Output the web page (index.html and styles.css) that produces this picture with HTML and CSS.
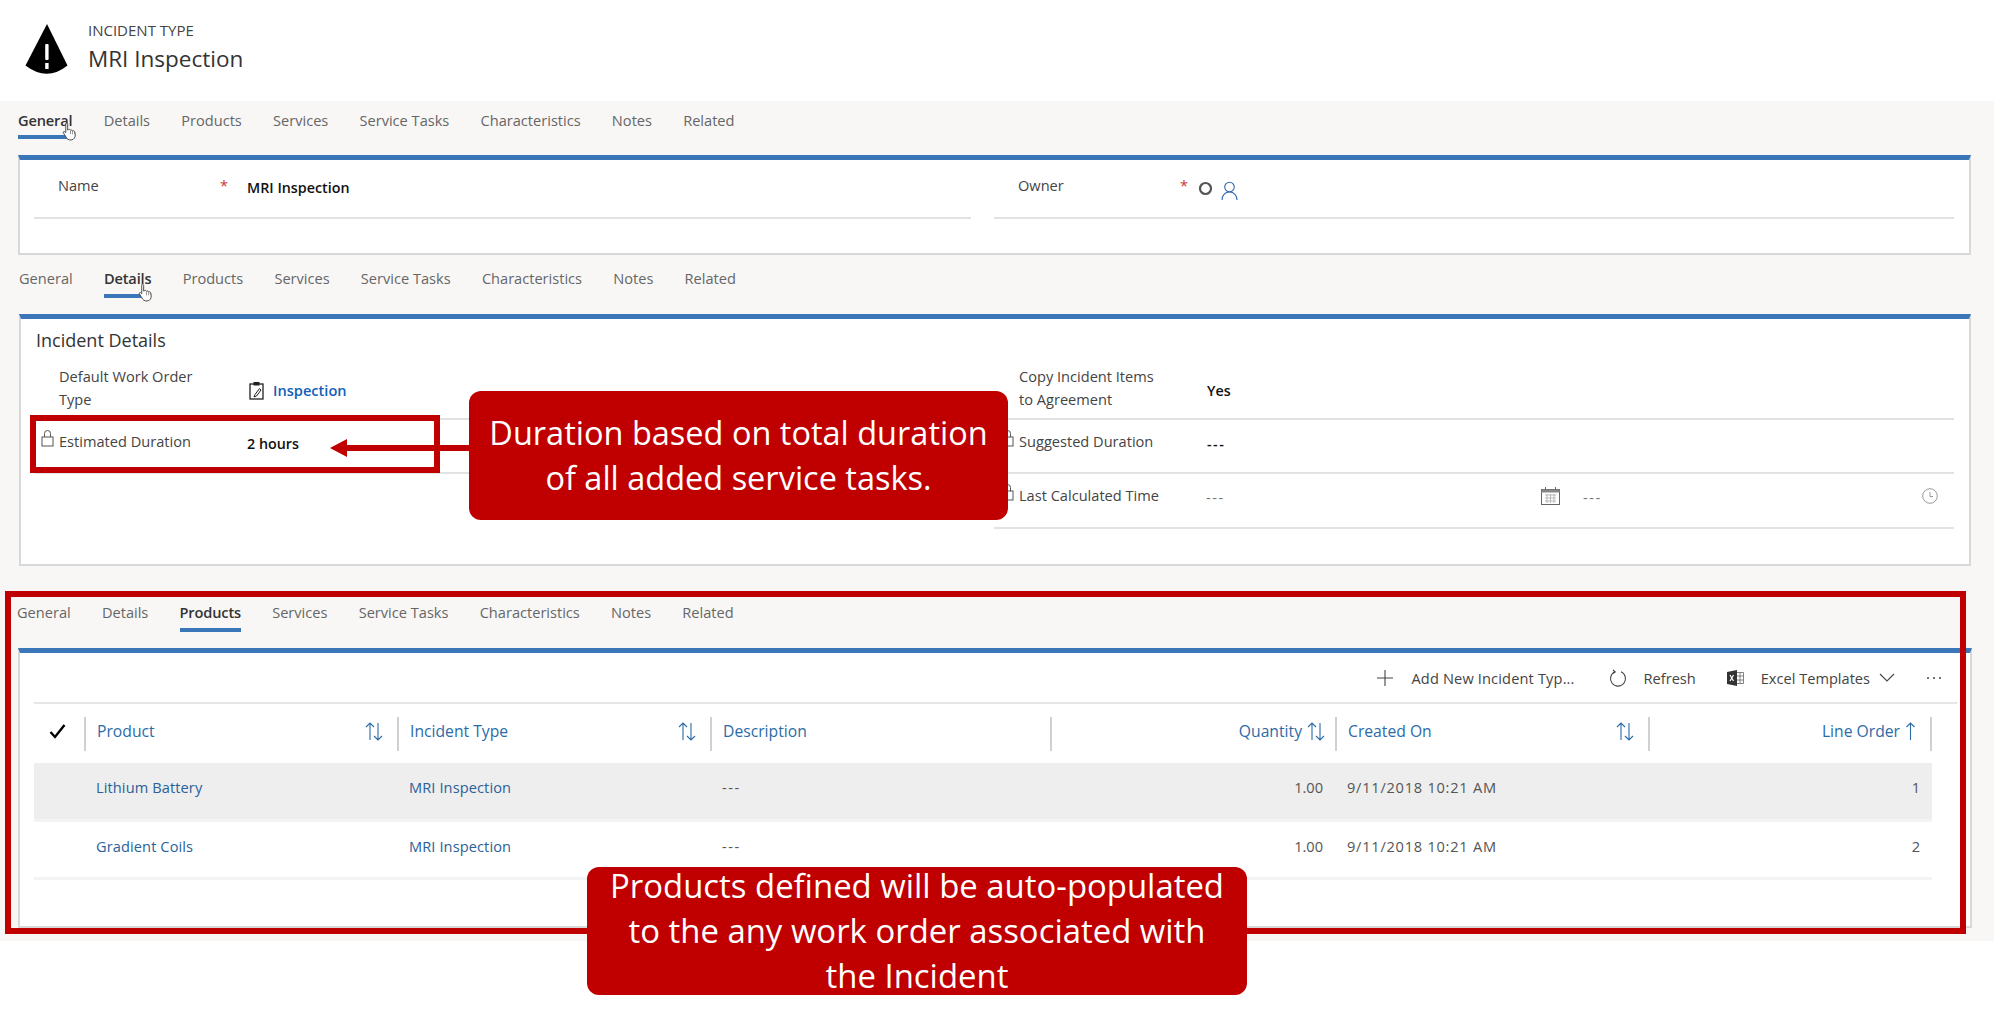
FILE: index.html

```html
<!DOCTYPE html>
<html lang="en">
<head>
    <meta charset="UTF-8">
    <title>Incident Type - MRI Inspection</title>
    <link rel="stylesheet" href="styles.css">
</head>
<body>
<div class="page">
    <header class="record-header">
        <svg class="record-icon" width="44" height="54" viewBox="0 0 44 54">
            <path d="M23 0 L43.500 41.500 Q23 58 1.500 41.500 Z" fill="#000"/>
            <rect x="21.200" y="20" width="3.400" height="16" rx="1" fill="#fff"/>
            <rect x="21.200" y="39" width="3.400" height="6" fill="#fff"/>
        </svg>
        <div>
            <div class="record-type">INCIDENT TYPE</div>
            <div class="record-name">MRI Inspection</div>
        </div>
    </header>

    <main class="content">
        <!-- General tab -->
        <section class="panel panel-general">
            <nav class="tabs">
                <a class="tab tab-active">General
                    <svg class="hand hand-general" width="17" height="19" viewBox="0 0 18 20"><path d="M4 1.500c1-.8 2 0 2 1v6l1-.5c1-.5 1.800 0 2 .6 1-.5 2 0 2.200.7 1-.4 2 .1 2.200 1l.6 3c.3 2-1 5.700-4.500 5.700-3 0-4.200-1.300-5.200-3L1.500 11.500c-.6-1 .6-2 1.500-1.200l1 1V2.500z" fill="#fff" stroke="#444" stroke-width="1"/><path d="M9 9v4M11.200 9.500v3.500M13.400 10.500v2.500" stroke="#777" stroke-width=".8"/></svg>
                </a>
                <a class="tab">Details</a>
                <a class="tab">Products</a>
                <a class="tab">Services</a>
                <a class="tab">Service Tasks</a>
                <a class="tab">Characteristics</a>
                <a class="tab">Notes</a>
                <a class="tab">Related</a>
            </nav>
            <div class="card card-general">
                <div class="columns">
                    <div class="field field-top">
                        <span class="field-label label-short">Name</span>
                        <span class="required">*</span>
                        <span class="field-value">MRI Inspection</span>
                    </div>
                    <div class="field field-top">
                        <span class="field-label label-short">Owner</span>
                        <span class="required">*</span>
                        <span class="owner-value">
                            <svg width="15" height="15" viewBox="0 0 15 15"><circle cx="7.500" cy="7.500" r="5.500" fill="none" stroke="#555" stroke-width="2.200"/></svg>
                            <svg width="17" height="19" viewBox="0 0 17 19"><circle cx="8.500" cy="6" r="4.800" fill="none" stroke="#2f64b0" stroke-width="1.100"/><path d="M1 19c0-4.500 3-8 7.500-8s7.500 3.500 7.500 8" fill="none" stroke="#2f64b0" stroke-width="1.100"/></svg>
                        </span>
                    </div>
                </div>
            </div>
        </section>

        <!-- Details tab -->
        <section class="panel panel-details">
            <nav class="tabs">
                <a class="tab">General</a>
                <a class="tab tab-active">Details
                    <svg class="hand hand-details" width="17" height="19" viewBox="0 0 18 20"><path d="M4 1.500c1-.8 2 0 2 1v6l1-.5c1-.5 1.800 0 2 .6 1-.5 2 0 2.200.7 1-.4 2 .1 2.200 1l.6 3c.3 2-1 5.700-4.500 5.700-3 0-4.200-1.300-5.200-3L1.500 11.500c-.6-1 .6-2 1.500-1.200l1 1V2.500z" fill="#fff" stroke="#444" stroke-width="1"/><path d="M9 9v4M11.200 9.500v3.500M13.400 10.500v2.500" stroke="#777" stroke-width=".8"/></svg>
                </a>
                <a class="tab">Products</a>
                <a class="tab">Services</a>
                <a class="tab">Service Tasks</a>
                <a class="tab">Characteristics</a>
                <a class="tab">Notes</a>
                <a class="tab">Related</a>
            </nav>
            <div class="card card-details">
                <h2 class="card-title">Incident Details</h2>
                <div class="columns">
                    <div>
                        <div class="field field-tall">
                            <span class="field-icon"></span>
                            <span class="field-label">Default Work Order Type</span>
                            <span class="lookup">
                                <svg width="15" height="19" viewBox="0 0 15 19"><rect x="1" y="3" width="13" height="15" fill="none" stroke="#222" stroke-width="1.300"/><rect x="4.500" y="1" width="6" height="3.500" fill="#222"/><path d="M10.500 7.500l-4.500 6-1 2.500 2.500-1 4.500-6z" fill="none" stroke="#222"/></svg>
                                <span class="link-value">Inspection</span>
                            </span>
                        </div>
                        <div class="field field-mid">
                            <span class="field-icon"><svg class="lock" width="13" height="17" viewBox="0 0 13 17"><rect x="1" y="7" width="11" height="9" fill="none" stroke="#555"/><path d="M3.500 7V3.500a3 3 0 0 1 6 0V7" fill="none" stroke="#555"/></svg></span>
                            <span class="field-label">Estimated Duration</span>
                            <span class="field-value value-low">2 hours</span>
                        </div>
                    </div>
                    <div>
                        <div class="field field-tall">
                            <span class="field-icon"></span>
                            <span class="field-label">Copy Incident Items to Agreement</span>
                            <span class="field-value">Yes</span>
                        </div>
                        <div class="field field-mid">
                            <span class="field-icon"><svg class="lock" width="13" height="17" viewBox="0 0 13 17"><rect x="1" y="7" width="11" height="9" fill="none" stroke="#555"/><path d="M3.500 7V3.500a3 3 0 0 1 6 0V7" fill="none" stroke="#555"/></svg></span>
                            <span class="field-label">Suggested Duration</span>
                            <span class="field-value value-low dashes">---</span>
                        </div>
                        <div class="field field-mid field-last">
                            <span class="field-icon"><svg class="lock" width="13" height="17" viewBox="0 0 13 17"><rect x="1" y="7" width="11" height="9" fill="none" stroke="#555"/><path d="M3.500 7V3.500a3 3 0 0 1 6 0V7" fill="none" stroke="#555"/></svg></span>
                            <span class="field-label">Last Calculated Time</span>
                            <div class="date-value">
                                <span class="date-text dashes">---</span>
                                <svg width="19" height="18" viewBox="0 0 19 18"><rect x=".5" y="2.500" width="18" height="15" fill="none" stroke="#666"/><rect x=".5" y="2.500" width="18" height="3" fill="#888"/><path d="M4.500 0v3M14.500 0v3" stroke="#666"/><path d="M4 8h11M4 11h11M4 14h11M6 7v9M9.500 7v9M13 7v9" stroke="#aaa" stroke-width=".8"/></svg>
                                <span class="time-text dashes">---</span>
                                <svg width="16" height="16" viewBox="0 0 16 16"><circle cx="8" cy="8" r="7.300" fill="none" stroke="#999"/><path d="M8 4v4.500h3" fill="none" stroke="#999"/></svg>
                            </div>
                        </div>
                    </div>
                </div>
            </div>
        </section>

        <!-- Products tab -->
        <section class="panel panel-products">
            <nav class="tabs">
                <a class="tab">General</a>
                <a class="tab">Details</a>
                <a class="tab tab-active">Products</a>
                <a class="tab">Services</a>
                <a class="tab">Service Tasks</a>
                <a class="tab">Characteristics</a>
                <a class="tab">Notes</a>
                <a class="tab">Related</a>
            </nav>
            <div class="card card-products">
                <div class="toolbar">
                    <button class="tool tool-add">
                        <svg width="18" height="18" viewBox="0 0 18 18"><path d="M9 1v16M1 9h16" stroke="#444" stroke-width="1.100"/></svg>
                        <span>Add New Incident Typ...</span>
                    </button>
                    <button class="tool">
                        <svg width="18" height="18" viewBox="0 0 18 18"><path d="M6 2.800a7.500 7.500 0 1 0 6 0" fill="none" stroke="#444" stroke-width="1.100"/><path d="M4 1l2.200 2-2.500 1.500" fill="none" stroke="#444" stroke-width="1.100"/></svg>
                        <span>Refresh</span>
                    </button>
                    <button class="tool">
                        <svg width="17" height="16" viewBox="0 0 17 16"><path d="M0 2l10-2v16L0 14z" fill="#333"/><path d="M3 5l3.500 6M6.500 5L3 11" stroke="#fff" stroke-width="1.200"/><path d="M10 2.500h6.500v11H10M13 2.500v11M10 6h6.500M10 10h6.500" fill="none" stroke="#666" stroke-width=".8"/></svg>
                        <span>Excel Templates</span>
                        <svg class="chevron" width="16" height="9" viewBox="0 0 16 9"><path d="M1 1l7 7 7-7" fill="none" stroke="#444" stroke-width="1.100"/></svg>
                    </button>
                    <svg class="more" width="16" height="4" viewBox="0 0 16 4"><circle cx="2" cy="2" r="1" fill="#444"/><circle cx="8" cy="2" r="1" fill="#444"/><circle cx="14" cy="2" r="1" fill="#444"/></svg>
                </div>
                <div class="grid grid-head">
                    <div class="head-cell head-check">
                        <svg width="17" height="15" viewBox="0 0 17 15"><path d="M1.500 8l4.500 5L15.500 1" fill="none" stroke="#000" stroke-width="2.400"/></svg>
                    </div>
                    <div class="head-cell"><span>Product</span>
                        <svg class="sort" width="18" height="19" viewBox="0 0 18 19"><path d="M5 18V1M1 5l4-4 4 4M13 1v17M9 14l4 4 4-4" fill="none" stroke="#2b6ca8" stroke-width="1.100"/></svg>
                    </div>
                    <div class="head-cell"><span>Incident Type</span>
                        <svg class="sort" width="18" height="19" viewBox="0 0 18 19"><path d="M5 18V1M1 5l4-4 4 4M13 1v17M9 14l4 4 4-4" fill="none" stroke="#2b6ca8" stroke-width="1.100"/></svg>
                    </div>
                    <div class="head-cell"><span>Description</span></div>
                    <div class="head-cell head-right"><span>Quantity</span>
                        <svg class="sort-tight" width="18" height="19" viewBox="0 0 18 19"><path d="M5 18V1M1 5l4-4 4 4M13 1v17M9 14l4 4 4-4" fill="none" stroke="#2b6ca8" stroke-width="1.100"/></svg>
                    </div>
                    <div class="head-cell"><span>Created On</span>
                        <svg class="sort" width="18" height="19" viewBox="0 0 18 19"><path d="M5 18V1M1 5l4-4 4 4M13 1v17M9 14l4 4 4-4" fill="none" stroke="#2b6ca8" stroke-width="1.100"/></svg>
                    </div>
                    <div class="head-cell head-right head-last"><span>Line Order</span>
                        <svg class="sort-tight" width="11" height="19" viewBox="0 0 11 19"><path d="M5.500 18V1M1.500 5l4-4 4 4" fill="none" stroke="#2b6ca8" stroke-width="1.100"/></svg>
                    </div>
                </div>
                <div class="grid grid-row row-hover">
                    <div></div>
                    <div class="cell cell-link">Lithium Battery</div>
                    <div class="cell cell-link">MRI Inspection</div>
                    <div class="cell dashes">---</div>
                    <div class="cell cell-right">1.00</div>
                    <div class="cell cell-date">9/11/2018 10:21 AM</div>
                    <div class="cell cell-right">1</div>
                </div>
                <div class="grid grid-row">
                    <div></div>
                    <div class="cell cell-link">Gradient Coils</div>
                    <div class="cell cell-link">MRI Inspection</div>
                    <div class="cell dashes">---</div>
                    <div class="cell cell-right">1.00</div>
                    <div class="cell cell-date">9/11/2018 10:21 AM</div>
                    <div class="cell cell-right">2</div>
                </div>
            </div>
        </section>
    </main>

    <!-- annotations drawn on top of the screenshot -->
    <div class="mark mark-duration"></div>
    <div class="mark mark-products"></div>
    <div class="arrow"></div>
    <div class="callout callout-duration">Duration based on total duration<br>of all added service tasks.</div>
    <div class="callout callout-products">Products defined will be auto-populated<br>to the any work order associated with<br>the Incident</div>
</div>
</body>
</html>
```

FILE: styles.css

```css
* {
    box-sizing: border-box;
}
body {
    margin: 0;
    background-color: white;
    font-family: "Open Sans", "Noto Sans", Arial, sans-serif;
    font-size: 14.600px;
    color: #444;
}
.page {
    position: relative;
    height: 1022px;
    overflow: hidden;
}

/* header */
.record-header {
    display: flex;
    height: 101px;
    padding: 18px 0 0 24px;
}
.record-icon {
    margin: 6px 20px 0 0;
}
.record-type {
    font-size: 15px;
    line-height: 24px;
    color: #444;
}
.record-name {
    font-size: 22.500px;
    line-height: 34px;
    color: #333;
}

/* tabs */
.content {
    width: 1994px;
    padding-bottom: 13px;
    background-color: #f8f7f6;
}
.tabs {
    display: flex;
    gap: 31.200px;
    padding-bottom: 16px;
}
.tab {
    position: relative;
    display: block;
    padding-bottom: 6px;
    border-bottom: 4px solid transparent;
    line-height: 20px;
    color: #666;
}
.tab-active {
    border-bottom-color: #3b76b8;
    font-weight: 600;
    letter-spacing: -0.15px;
    color: #333;
}
.hand {
    position: absolute;
}
.hand-general {
    right: -7px;
    top: 12px;
}
.hand-details {
    right: -4px;
    top: 15px;
}
.panel-general {
    padding: 9px 0 4px 18px;
}
.panel-general .tab {
    padding-bottom: 5px;
}
.panel-details {
    padding: 9px 0 36px 19px;
}
.panel-products {
    padding: 0 0 0 18px;
}
.panel-products .tabs {
    margin-left: -1px;
}

/* cards */
.card {
    width: 1953px;
    border: 2px solid #d8d8d8;
    border-top: 5px solid #3b76b8;
    background-color: white;
}
.card-general {
    height: 100px;
    padding-left: 14px;
}
.card-details {
    height: 252px;
    width: 1952px;
    padding-left: 13px;
}
.card-products {
    height: 280px;
    width: 1954px;
    padding: 0 13px 0 14px;
}
.card-title {
    margin: 9px 0 12px 2px;
    font-size: 18px;
    font-weight: 400;
    line-height: 25px;
    color: #333;
}
.columns {
    display: grid;
    grid-template-columns: 937px 960px;
    gap: 23px;
}

/* form fields */
.field {
    display: flex;
    border-bottom: 2px solid #e2e2e2;
    line-height: 23px;
}
.field-top {
    height: 59px;
    padding: 14px 0 0 24px;
}
.field-tall {
    height: 55px;
    align-items: center;
}
.field-tall .lookup,
.field-tall .field-value {
    margin-bottom: 2px;
}
.field-mid {
    height: 54px;
    padding-top: 10px;
}
.field-last {
    height: 55px;
}
.field-icon {
    flex: none;
    width: 25px;
}
.lock {
    display: block;
    margin: 0 0 0 7px;
}
.field-label {
    flex: none;
    align-self: flex-start;
    width: 188px;
    padding-right: 40px;
    color: #444;
}
.label-short {
    width: 162px;
    padding-right: 0;
}
.required {
    flex: none;
    width: 27px;
    color: #d13438;
}
.field-value {
    font-size: 14.300px;
    font-weight: 600;
    color: #111;
}
.field-top .field-value {
    padding-top: 2px;
}
.value-low {
    padding-top: 2px;
}
.dashes {
    letter-spacing: 1.500px;
}
.owner-value {
    display: flex;
    gap: 8px;
    margin: 7px 0 0 -9px;
}
.lookup {
    display: flex;
    align-items: center;
    gap: 9px;
    margin-left: 2px;
}
.link-value {
    font-weight: 600;
    color: #1160b7;
}
.date-value {
    display: flex;
    flex: 1;
    height: 23px;
    align-items: center;
    color: #777;
}
.date-text {
    width: 335px;
    margin-left: -1px;
    padding-top: 4px;
}
.time-text {
    width: 339px;
    margin-left: 23px;
    padding-top: 4px;
}

/* list toolbar */
.toolbar {
    display: flex;
    justify-content: flex-end;
    align-items: center;
    height: 51px;
    padding-right: 15px;
    border-bottom: 2px solid #e6e6e6;
}
.tool {
    display: flex;
    align-items: center;
    gap: 17px;
    margin-right: 31px;
    padding: 0;
    border: none;
    background: none;
    font: inherit;
    color: #444;
}
.tool-add {
    margin-right: 34px;
    letter-spacing: 0.15px;
}
.chevron {
    margin-left: -8px;
}

/* list grid */
.grid {
    display: grid;
    grid-template-columns: 50px 313px 313px 340px 285px 313px 284px;
    width: 1898px;
}
.grid-head {
    height: 59px;
    padding-top: 13px;
    align-items: start;
}
.head-cell {
    display: flex;
    justify-content: space-between;
    align-items: center;
    height: 34px;
    padding: 0 14px 6px 11px;
    border-left: 2px solid #d0d0d0;
    font-size: 15.700px;
    color: #2b6ca8;
}
.head-check {
    justify-content: flex-start;
    padding: 0 0 6px 15px;
    border-left: none;
}
.head-right {
    justify-content: flex-end;
    gap: 5px;
    padding-right: 10px;
}
.head-last {
    padding-right: 14px;
    border-right: 2px solid #d0d0d0;
}
.grid-row {
    height: 59px;
    padding-bottom: 3px;
    border-bottom: 3px solid #f3f3f3;
    align-items: center;
}
.grid-row:last-child {
    height: 58px;
}
.row-hover {
    background-color: #eeeeee;
}
.cell {
    padding: 0 12px 5px;
    color: #555;
}
.cell-link {
    letter-spacing: 0.1px;
    color: #2b6198;
}
.cell-right {
    text-align: right;
}
.cell-date {
    letter-spacing: 0.75px;
}

/* annotations */
.mark {
    position: absolute;
    border: 6px solid #c00000;
}
.mark-duration {
    left: 30px;
    top: 415px;
    width: 410px;
    height: 58px;
}
.mark-products {
    left: 5px;
    top: 591px;
    width: 1961px;
    height: 343px;
}
.arrow {
    position: absolute;
    left: 347px;
    top: 445px;
    width: 122px;
    height: 6px;
    background-color: #c00000;
}
.arrow::before {
    content: "";
    position: absolute;
    left: -17px;
    top: -6px;
    border-top: 9px solid transparent;
    border-bottom: 9px solid transparent;
    border-right: 17px solid #c00000;
}
.callout {
    position: absolute;
    display: flex;
    align-items: center;
    justify-content: center;
    padding-bottom: 2px;
    border-radius: 12px;
    background-color: #c00000;
    color: white;
    font-size: 32.500px;
    line-height: 45px;
    text-align: center;
}
.callout-duration {
    left: 469px;
    top: 391px;
    width: 539px;
    height: 129px;
}
.callout-products {
    left: 587px;
    top: 867px;
    width: 660px;
    height: 128px;
    font-size: 32.900px;
}
```
